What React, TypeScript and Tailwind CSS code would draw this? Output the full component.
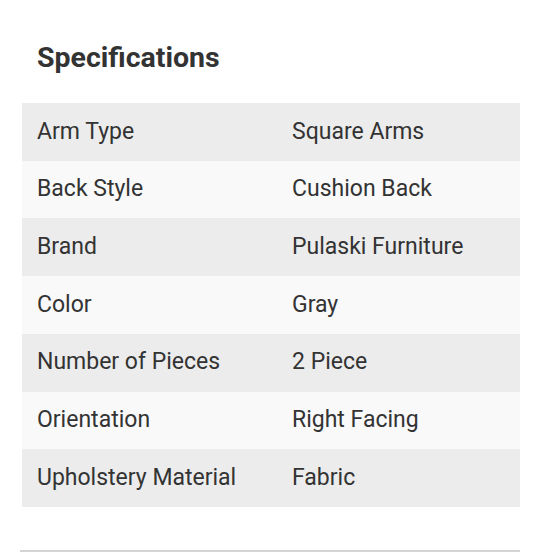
import React from "react";

const rows: [string, string][] = [
  ["Arm Type", "Square Arms"],
  ["Back Style", "Cushion Back"],
  ["Brand", "Pulaski Furniture"],
  ["Color", "Gray"],
  ["Number of Pieces", "2 Piece"],
  ["Orientation", "Right Facing"],
  ["Upholstery Material", "Fabric"],
];

export default function App() {
  return (
    <div className="w-[540px] h-[557px] bg-white overflow-hidden font-['Roboto',sans-serif] text-[#333333]">
      <div className="pl-[37px] pt-[40px] h-[103px]">
        <h2 className="text-[28.5px] font-bold leading-[36px] text-[#333333]">Specifications</h2>
      </div>
      <div className="mx-[22px] w-[498px] h-[404px] flex flex-col">
        {rows.map(([k, v], i) => (
          <div
            key={k}
            className={`flex-1 grid grid-cols-[270px_1fr] items-center text-[23px] ${i % 2 === 0 ? "bg-[#ececec]" : "bg-[#f9f9f9]"}`}
          >
            <span className="pl-[15px]">{k}</span>
            <span>{v}</span>
          </div>
        ))}
      </div>
      <div className="mx-[20px] mt-[43px] h-[2px] bg-[#d4d4d4]" />
    </div>
  );
}
